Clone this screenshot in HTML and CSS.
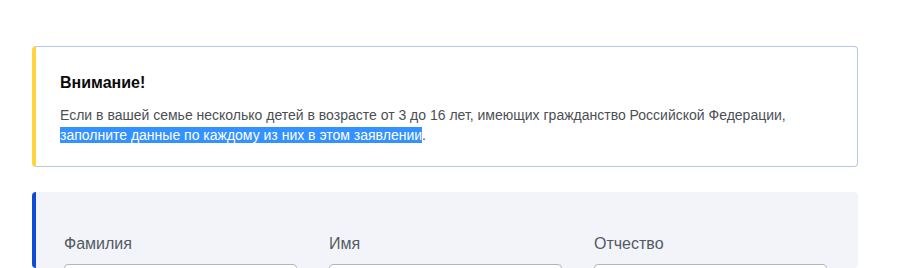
FILE: index.html
```html
<!DOCTYPE html>
<html lang="ru">
<head>
<meta charset="utf-8">
<title>Заявление</title>
<link rel="stylesheet" href="styles.css">
</head>
<body>
<main class="page">
  <section class="alert">
    <h3 class="alert-title">Внимание!</h3>
    <p class="alert-text">Если в вашей семье несколько детей в возрасте от 3 до 16 лет, имеющих гражданство Российской Федерации, <span class="sel">заполните данные по каждому из них в этом заявлении</span>.</p>
  </section>
  <section class="card">
    <div class="fields">
      <div class="field">
        <label class="label">Фамилия</label>
        <div class="input"></div>
      </div>
      <div class="field">
        <label class="label">Имя</label>
        <div class="input"></div>
      </div>
      <div class="field">
        <label class="label">Отчество</label>
        <div class="input"></div>
      </div>
    </div>
  </section>
</main>
</body>
</html>
```

FILE: styles.css
```css
html, body {
  margin: 0;
  padding: 0;
  background: #ffffff;
  overflow: hidden;
}
body {
  font-family: "Liberation Sans", Arial, sans-serif;
  width: 912px;
  height: 268px;
}
.page {
  padding: 46px 54px 0 32px;
  display: flex;
  flex-direction: column;
  gap: 25px;
}
.alert {
  border: 1px solid #b7c6e6;
  border-left: 4px solid #ffd53f;
  border-radius: 4px;
  padding: 25px 24px 24px 24px;
  height: 70px;
}
.alert-title {
  margin: 0 0 11px;
  font-size: 16px;
  line-height: 22px;
  font-weight: bold;
  color: #0b0b0b;
}
.alert-text {
  margin: 0;
  font-size: 14px;
  line-height: 20px;
  color: #4b4f55;
}
.sel {
  background: #3392ff;
  color: #ffffff;
}
.card {
  background: #f2f4f9;
  border-left: 4px solid #0d4cd3;
  border-radius: 4px;
  padding: 42px 32px 0 28px;
  height: 34px;
}
.fields {
  display: grid;
  grid-template-columns: repeat(3, 233px);
  gap: 32px;
}
.field {
  display: flex;
  flex-direction: column;
}
.label {
  font-size: 16px;
  line-height: 20px;
  color: #535b63;
  margin-bottom: 10px;
}
.input {
  height: 40px;
  background: #ffffff;
  border: 1px solid #b1b6bd;
  border-radius: 4px;
}
```
